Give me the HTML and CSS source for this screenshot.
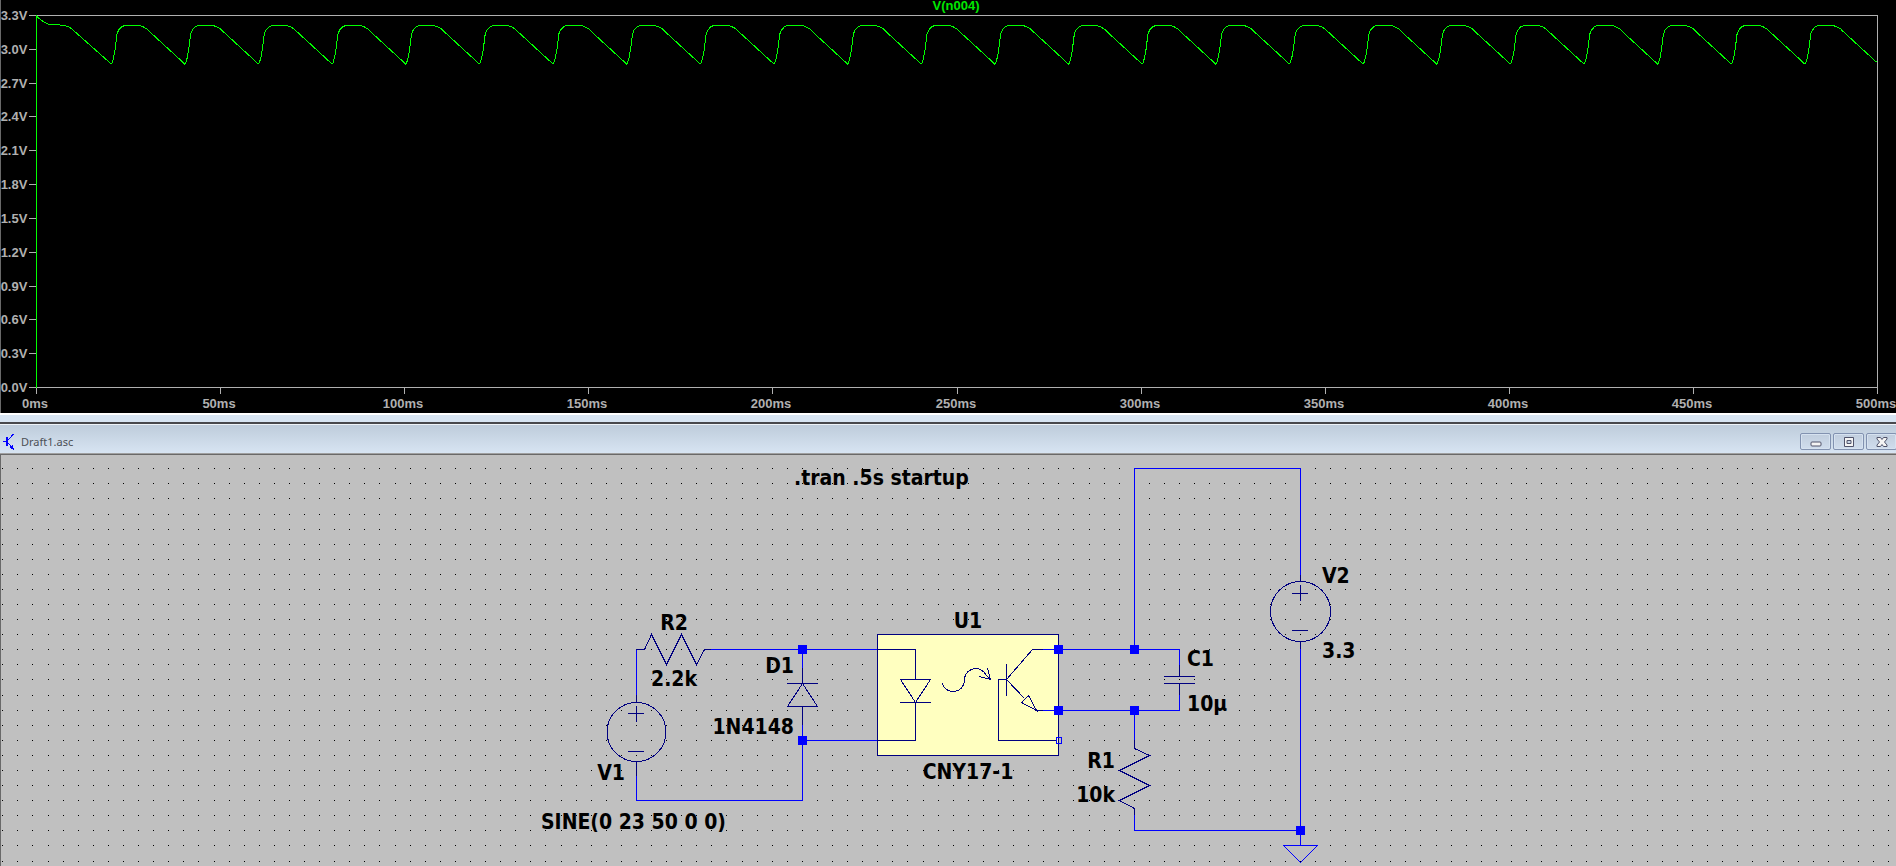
FILE: index.html
```html
<!DOCTYPE html>
<html lang="en">
<head>
<meta charset="utf-8">
<title>Draft1.asc</title>
<link rel="stylesheet" href="styles.css">
</head>
<body>
<main class="workspace">
  <section class="plot" aria-label="Waveform viewer">
    <svg class="plot-drawing" viewBox="0 0 1896 413" role="img" aria-label="V(n004) against time">
      <path class="axis" d="M29 15.5H1877.5V394M36 387.5H1877.5"/>
      <g id="axis-ticks" class="axis"></g>
      <g id="axis-labels" class="axis-label"></g>
      <path class="trace" d="M36.500 15V388"/>
      <path id="trace" class="trace"/>
      <text class="trace-name" x="956" y="10">V(n004)</text>
    </svg>
  </section>
  <section class="window">
    <header class="titlebar">
      <svg class="app-icon" viewBox="0 0 12 16" aria-hidden="true">
        <path class="icon-line" d="M0 7.500H4M10.500 0L5 6M5 9L10.500 15"/>
        <path class="icon-fill" d="M3 3H5V12H3ZM11 16L10 11L6 13Z"/>
      </svg>
      <h1 class="title">Draft1.asc</h1>
      <div class="controls">
        <button class="control" type="button" aria-label="Minimize">
          <svg class="glyph" viewBox="0 0 12 10"><rect x="1" y="5" width="10" height="4" rx="1"/></svg>
        </button>
        <button class="control" type="button" aria-label="Restore">
          <svg class="glyph" viewBox="0 0 12 10"><path fill-rule="evenodd" d="M1.500 .5H10.500V9.500H1.500ZM4 3.500H8V6.500H4Z"/></svg>
        </button>
        <button class="control" type="button" aria-label="Close">
          <svg class="glyph" viewBox="0 0 12 10"><path d="M1 .5H4.500L6 2.500L7.500 .5H11V2L8.500 5L11 8V9.500H7.500L6 7.500L4.500 9.500H1V8L3.500 5L1 2Z"/></svg>
        </button>
      </div>
    </header>
    <div class="sheet">
      <svg class="schematic" viewBox="0 455 1896 411" role="img" aria-label="Optocoupler circuit">
        <path id="grid" class="grid"/>
        <rect class="body" x="877.500" y="634.500" width="181" height="121"/>
        <g class="wire">
          <path d="M636.500 697V649.500H644M711 649.500H877M802.500 649V668M802.500 725V800.500H636.500V776M802 740.500H877"/>
          <path d="M1043 649.500H1179.500V665M1043 710.500H1179.500V695M1134.500 649V468.500H1300.500V575M1300.500 649V845M1134.500 710V740M1134.500 815V830.500H1300"/>
          <path d="M1283.500 845.500H1317.500L1300.500 862.500Z"/>
        </g>
        <g class="part">
          <path d="M636 649.500H644.500L651.500 634.500L666.500 664.500L681.500 634.500L696.500 664.500L704.500 649.500H711"/>
          <circle cx="636.500" cy="732" r="29.500"/>
          <path d="M636.500 695V702M636.500 761V776M628 713.500H644M636.500 706V722M628 751.500H644"/>
          <path d="M802.500 668V683M802.500 706V725M787 683.500H818M802.500 683.500L787.500 706.500H817.500Z"/>
          <path d="M877 649.500H915.500V679M915.500 702V740.500H877M900 702.500H931M900.500 679.500H930.500L915.500 702.500Z"/>
          <path d="M942.500 683.500C943 688 948 691.500 953 691.500C960 691.500 964.500 686 964.500 680C964.500 673 970 668.500 976 668.500C982 668.500 985 673 986.500 675.500L990.500 679.500M979 676.500L990.500 679.500L987.500 668"/>
          <path d="M1006.500 664V696M1006.500 679.500L1032.500 649.500H1043M1006.500 679.500L1024.500 698.500M1028.500 695.500L1021.500 702.500L1036.500 710.500ZM1036 710.500H1043M1007 679.500H998.500V740.500H1056"/>
          <path d="M1179.500 665V676M1164 676.500H1195M1164 683.500H1195M1179.500 684V695"/>
          <path d="M1134.500 740V748.500L1149.500 755.500L1119.500 770.500L1149.500 785.500L1119.500 800.500L1134.500 808.500V815"/>
          <circle cx="1300.500" cy="611.500" r="30"/>
          <path d="M1300.500 575V581M1300.500 641V649M1292 593.500H1308M1300.500 585V601M1292 630.500H1308"/>
        </g>
        <path class="node" d="M798 645h9v9h-9zM798 736h9v9h-9zM1054 645h9v9h-9zM1054 706h9v9h-9zM1130 645h9v9h-9zM1130 706h9v9h-9zM1296 826h9v9h-9z"/>
        <rect class="terminal" x="1056.500" y="737.500" width="5" height="6"/>
        <g class="label">
          <text x="794" y="485">.tran .5s startup</text>
          <text x="541" y="829">SINE(0 23 50 0 0)</text>
          <text x="1187" y="666">C1</text>
          <text x="1187" y="711">10µ</text>
          <text x="1322" y="583">V2</text>
          <text x="1322" y="658">3.3</text>
        </g>
        <g class="label label-center">
          <text x="674" y="630">R2</text>
          <text x="674" y="686">2.2k</text>
          <text x="968" y="628">U1</text>
          <text x="968" y="779">CNY17-1</text>
        </g>
        <g class="label label-end">
          <text x="794" y="673">D1</text>
          <text x="794" y="734">1N4148</text>
          <text x="625" y="780">V1</text>
          <text x="1115" y="768">R1</text>
          <text x="1115" y="802">10k</text>
        </g>
      </svg>
    </div>
  </section>
</main>
<script src="plot.js"></script>
</body>
</html>
```
FILE: styles.css
```css
* { box-sizing: border-box; }
body {
  margin: 0;
  background: #c0c0c0;
  font-family: "Noto Sans", "Open Sans", sans-serif;
  overflow: hidden;
}
.workspace { display: flex; flex-direction: column; min-height: 100vh; }
svg { display: block; }

.plot { background: #000; border-bottom: 2px solid #fff; box-shadow: inset 1px 0 #696969; }
.plot-drawing { width: 100%; height: auto; overflow: visible; }
.axis, .trace, .wire, .part, .terminal { fill: none; stroke-width: 1; shape-rendering: crispEdges; }
.axis { stroke: #b0b0b0; }
.trace { stroke: #0f0; }
.axis-label, .trace-name {
  font: bold 13px "Liberation Sans", Arial, sans-serif;
  text-anchor: middle;
  fill: #b0b0b0;
}
.trace-name { fill: #00e800; }

.window { flex: 1; display: flex; flex-direction: column; border-top: 7px solid #d7e4f2; }
.titlebar {
  display: flex;
  align-items: center;
  gap: 6px;
  height: 33px;
  padding: 5px 0 0 3px;
  border-top: 2px solid #48484c;
  border-bottom: 1px solid #696969;
  background: linear-gradient(#bdcbda, #d8e5f3);
  box-shadow: inset 0 1px #eef3f8, inset 0 -1px #a0a0a0;
}
.app-icon { width: 12px; height: 16px; }
.icon-line { fill: none; stroke: #00f; shape-rendering: crispEdges; }
.icon-fill { fill: #00f; shape-rendering: crispEdges; }
.title { margin: 0; flex: 1; font-size: 11px; line-height: 16px; font-weight: 400; color: #4c5056; }
.controls { display: flex; gap: 2px; margin-right: -1px; }
.control {
  display: flex;
  align-items: center;
  justify-content: center;
  width: 31px;
  height: 17px;
  padding: 0;
  border: 1px solid #8292b0;
  border-radius: 2px;
  background: linear-gradient(#c0cddd, #d0dded);
  box-shadow: inset 0 0 0 1px #d6e2f0;
}
.glyph { width: 12px; height: 10px; fill: #f4f4f4; stroke: #50536a; }

.sheet { flex: 1; background: #c0c0c0; box-shadow: inset 1px 0 #696969; }
.schematic { width: 100%; height: auto; }
.grid { fill: #000; shape-rendering: crispEdges; }
.body { fill: #ffffc0; stroke: #000080; shape-rendering: crispEdges; }
.wire { stroke: #00f; }
.part { stroke: #000080; }
.node { fill: #00f; shape-rendering: crispEdges; }
.terminal { stroke: #00f; }
.label { font: bold 21px "DejaVu Sans Condensed", "DejaVu Sans", Tahoma, sans-serif; fill: #000; }
.label-center { text-anchor: middle; }
.label-end { text-anchor: end; }
```
FILE: plot.js
```js
const SVG = "http://www.w3.org/2000/svg";
const ticks = document.getElementById("axis-ticks");
const labels = document.getElementById("axis-labels");

function add(parent, name, attrs, text) {
  const el = document.createElementNS(SVG, name);
  for (const key in attrs) el.setAttribute(key, attrs[key]);
  if (text) el.textContent = text;
  parent.append(el);
}

// Voltage axis: 0.0V to 3.3V in steps of 0.3V
for (let i = 0; i <= 11; i++) {
  const y = Math.round(387 - i * 33.82);
  add(ticks, "path", { d: `M29 ${y + 0.5}H36` });
  add(labels, "text", { x: 14, y: y + 5 }, (i * 0.3).toFixed(1) + "V");
}

// Time axis: 0 to 500ms in steps of 50ms
for (let i = 0; i <= 10; i++) {
  const x = Math.round(36 + i * 184.1);
  add(ticks, "path", { d: `M${x + 0.5} 387V394` });
  add(labels, "text", { x: x - 1, y: 408 }, i * 50 + "ms");
}

// One 20ms ripple cycle, as x offset and y
const cycle = [[0, 64], [1, 63], [2.5, 58], [4, 50], [6, 34], [7.7, 30], [10.5, 27], [13.5, 25.5],
  [28.5, 25.5], [32.5, 27], [36, 29], [39, 32], [71.6, 62]];
const points = [[36.5, 15.5], [38.5, 18], [41.5, 20.5], [45, 22.5], [49, 24.5], [60, 25], [66, 26], [70, 27.5], [73, 30], [109, 62]];
for (let n = 0; n < 24; n++) {
  for (const [dx, y] of cycle) points.push([111 + n * 73.64 + dx, y]);
}
document.getElementById("trace").setAttribute("d", "M" + points.map(p => p.join(" ")).join("L"));

// Schematic grid dots
let dots = "";
for (let j = 0; j < 27; j++) {
  for (let k = 0; k < 126; k++) {
    dots += `M${Math.floor(2.81 + k * 15.0865)} ${Math.floor(468.77 + j * 15.0865)}h1v1h-1z`;
  }
}
document.getElementById("grid").setAttribute("d", dots);
```
